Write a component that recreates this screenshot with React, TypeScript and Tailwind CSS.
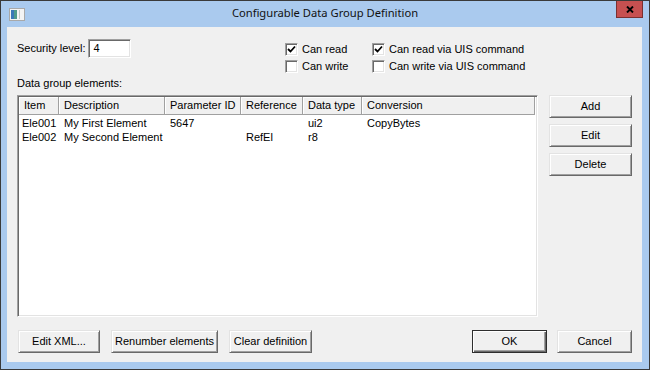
import React from 'react';

interface BtnProps {
  children: React.ReactNode;
  className?: string;
  isDefault?: boolean;
}

const Btn: React.FC<BtnProps> = ({ children, className = '', isDefault }) => (
  <button
    className={
      isDefault
        ? `h-[23px] bg-[#f0f0f0] border border-[#2e2e2e] shadow-[inset_1px_1px_#ffffff,inset_-1px_-1px_#696969,inset_-2px_-2px_#a0a0a0] text-[11px] text-black ${className}`
        : `h-[23px] bg-[#f0f0f0] border border-t-[#e3e3e3] border-l-[#e3e3e3] border-r-[#696969] border-b-[#696969] shadow-[inset_1px_1px_#ffffff,inset_-1px_-1px_#a0a0a0] text-[11px] text-black ${className}`
    }
  >
    {children}
  </button>
);

const CheckBox: React.FC<{ checked?: boolean; label: string }> = ({ checked, label }) => (
  <label className="flex items-center gap-[4px] h-[13px]">
    <span className="w-[13px] h-[13px] bg-white border border-t-[#a0a0a0] border-l-[#a0a0a0] border-r-white border-b-white shadow-[inset_1px_1px_#696969,inset_-1px_-1px_#e3e3e3] flex items-center justify-center">
      {checked && (
        <svg width="9" height="9" viewBox="0 0 9 9">
          <path d="M1 4 L3.5 6.5 L8 1.5" fill="none" stroke="#000" strokeWidth="1.8" />
        </svg>
      )}
    </span>
    <span className="leading-[13px]">{label}</span>
  </label>
);

const columns = [
  { name: 'Item', w: 'w-[40px]' },
  { name: 'Description', w: 'w-[106px]' },
  { name: 'Parameter ID', w: 'w-[76px]' },
  { name: 'Reference', w: 'w-[62px]' },
  { name: 'Data type', w: 'w-[59px]' },
  { name: 'Conversion', w: 'w-[173px]' },
];

const rows = [
  ['Ele001', 'My First Element', '5647', '', 'ui2', 'CopyBytes'],
  ['Ele002', 'My Second Element', '', 'RefEl', 'r8', ''],
];

export default function App() {
  return (
    <div className="w-[650px] h-[370px] bg-[#aacaee] border border-[#3a3a3a] flex flex-col font-['Liberation_Sans',Arial,sans-serif] text-[11px] text-black overflow-hidden">
      {/* title bar */}
      <div className="relative h-[26px] flex items-center justify-center shrink-0">
        <svg className="absolute left-[8px] top-[7px]" width="16" height="13" viewBox="0 0 16 13">
          <rect x="0.5" y="0.5" width="15" height="12" fill="#f4f4f4" stroke="#a9a9a9" />
          <rect x="2" y="2" width="6" height="9" fill="#4f9a8c" />
          <rect x="2" y="2" width="3" height="9" fill="#3b78b8" />
          <rect x="10" y="2" width="1" height="9" fill="#c8c8c8" />
        </svg>
        <span className="text-[11.2px] font-['Noto_Sans',sans-serif] text-[#111] -mt-[1px]">Configurable Data Group Definition</span>
        <div className="absolute right-[6px] -top-px w-[27px] h-[18px] bg-[#c75050] border border-[#7b3030] flex items-center justify-center">
          <svg width="8" height="7" viewBox="0 0 8 7">
            <path d="M1 0.5 L7 6.5 M7 0.5 L1 6.5" stroke="#000" strokeWidth="1.9" />
          </svg>
        </div>
      </div>

      {/* client */}
      <div className="ml-[6px] mr-[7px] mb-[7px] flex-1 bg-[#f0f0f0] px-[10px] flex flex-col">
        <div className="flex pt-[12px]">
          <div className="w-[268px] flex items-center h-[19px]">
            <span className="mr-[3px]">Security level:</span>
            <div className="w-[43px] h-[19px] bg-white border border-t-[#a0a0a0] border-l-[#a0a0a0] border-r-white border-b-white shadow-[inset_1px_1px_#696969,inset_-1px_-1px_#e3e3e3] pl-[4px] leading-[17px]">
              4
            </div>
          </div>
          <div className="grid grid-cols-[87px_auto] gap-y-[4px] mt-[4px]">
            <CheckBox checked label="Can read" />
            <CheckBox checked label="Can read via UIS command" />
            <CheckBox label="Can write" />
            <CheckBox label="Can write via UIS command" />
          </div>
        </div>

        <div className="mt-[4px] leading-[13px]">Data group elements:</div>

        <div className="flex mt-[5px] gap-[11px]">
          <div className="w-[521px] h-[222px] bg-white border border-t-[#a0a0a0] border-l-[#a0a0a0] border-r-white border-b-white shadow-[inset_1px_1px_#696969,inset_-1px_-1px_#e3e3e3] p-[1px] pr-[2px]">
            <div className="flex h-[18px] bg-[#f0f0f0] border-b border-[#a0a0a0]">
              {columns.map((c) => (
                <div
                  key={c.name}
                  className={`${c.w} shrink-0 border-r border-[#a0a0a0] shadow-[inset_1px_1px_#ffffff] pl-[5px] leading-[17px] whitespace-nowrap overflow-hidden`}
                >
                  {c.name}
                </div>
              ))}
            </div>
            <div className="pt-[1px]">
              {rows.map((r, i) => (
                <div key={i} className="flex h-[14px] leading-[14px]">
                  {r.map((cell, j) => (
                    <div
                      key={j}
                      className={`${columns[j].w} shrink-0 ${j === 0 ? 'pl-[3px]' : 'pl-[5px]'} whitespace-nowrap overflow-hidden`}
                    >
                      {cell}
                    </div>
                  ))}
                </div>
              ))}
            </div>
          </div>
          <div className="flex flex-col gap-[6px]">
            <Btn className="w-[83px]">Add</Btn>
            <Btn className="w-[83px]">Edit</Btn>
            <Btn className="w-[83px]">Delete</Btn>
          </div>
        </div>

        <div className="flex mt-[13px] ml-px">
          <Btn className="w-[82px]">Edit XML...</Btn>
          <Btn className="w-[107px] ml-[11px]">Renumber elements</Btn>
          <Btn className="w-[83px] ml-[11px]">Clear definition</Btn>
          <Btn isDefault className="w-[75px] ml-auto">OK</Btn>
          <Btn className="w-[75px] ml-[10px]">Cancel</Btn>
        </div>
      </div>
    </div>
  );
}
